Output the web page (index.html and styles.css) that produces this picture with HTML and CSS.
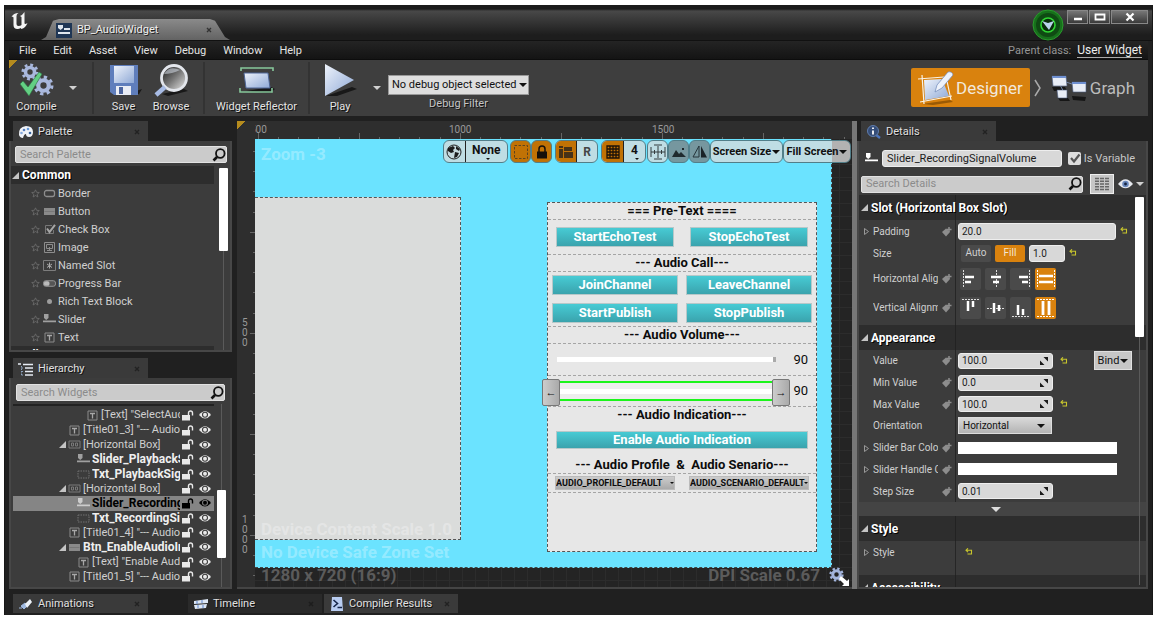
FILE: index.html
```html
<!DOCTYPE html>
<html lang="en">
<head>
<meta charset="utf-8">
<title>BP_AudioWidget</title>
<link rel="stylesheet" href="styles.css">
</head>
<body>
<svg class="defs" aria-hidden="true">
  <defs>
    <linearGradient id="g-blue" x1="0" y1="0" x2="1" y2="1"><stop offset="0" stop-color="#eef3fb"/><stop offset="1" stop-color="#8fa9d6"/></linearGradient>
    <linearGradient id="g-lens" x1="0" y1="0" x2="1" y2="1"><stop offset="0" stop-color="#111"/><stop offset=".5" stop-color="#777"/><stop offset="1" stop-color="#eee"/></linearGradient>
    <pattern id="ticks-x" x="3" width="101" height="18" patternUnits="userSpaceOnUse"><path d="M.5 12v6M20.5 16v2M40.500 16v2M60.500 16v2M81.500 16v2" stroke="#666"/></pattern>
    <pattern id="ticks-y" y="93" width="18" height="101" patternUnits="userSpaceOnUse"><path d="M13 .5h5M16 20.500h2M16 40.500h2M16 60.500h2M16 81.500h2" stroke="#666"/></pattern>
  </defs>
  <symbol id="x" viewBox="0 0 6 6"><path d="M1 1l4 4M5 1l-4 4" stroke="#181818" stroke-width="1.4"/></symbol>
  <symbol id="glass" viewBox="0 0 14 14"><circle cx="8.300" cy="5.500" r="4.300" fill="none" stroke="#111" stroke-width="1.800"/><path d="M5 9L1.500 12.500" stroke="#111" stroke-width="2.600"/></symbol>
  <symbol id="star" viewBox="0 0 9 9"><path d="M4.500.8l1.100 2.500 2.700.2-2.100 1.800.7 2.700-2.400-1.500L2.100 8l.7-2.700L.7 3.500l2.700-.2z" fill="none" stroke="#6e6e6e" stroke-width=".8"/></symbol>
  <symbol id="open" viewBox="0 0 7 7"><path d="M7 0v7H0z" fill="#c4c4c4"/></symbol>
  <symbol id="w-border" viewBox="0 0 13 11"><rect x="1.500" y="2.500" width="10" height="6" rx="2" fill="none" stroke="#8d8d8d" stroke-width="1.300"/></symbol>
  <symbol id="w-button" viewBox="0 0 13 11"><path d="M1 2h11v7H1z" fill="#8a8a8a"/><path d="M1.500 5.500h10" stroke="#777"/></symbol>
  <symbol id="w-check" viewBox="0 0 13 11"><path d="M9 1.500H2.500v8h8V6" fill="none" stroke="#777"/><path d="M4 4.500l2.500 3.500L12 .8" fill="none" stroke="#a6a6a6" stroke-width="2"/></symbol>
  <symbol id="w-image" viewBox="0 0 13 11"><path d="M1.500.5h10v10h-10zM3.500 2.500h6v4h-6zM6.500 5v3M4 8.500h5" fill="none" stroke="#8d8d8d"/></symbol>
  <symbol id="w-slot" viewBox="0 0 13 11"><path d="M.5.5h12v10H.5z" fill="none" stroke="#7d7d7d"/><path d="M6.500 2.500v6M4 4l5 3.500M9 4L4 7.500" stroke="#aaa"/></symbol>
  <symbol id="w-progress" viewBox="0 0 14 11"><rect x=".5" y="2.500" width="13" height="6" rx="2.500" fill="#555" stroke="#999"/><rect x="1" y="3" width="6" height="5" rx="2" fill="#bbb"/></symbol>
  <symbol id="w-dot" viewBox="0 0 13 11"><circle cx="6.500" cy="5.500" r="2.500" fill="#9d9d9d"/></symbol>
  <symbol id="w-slider" viewBox="0 0 13 11"><path d="M0 6.500h13v1.800H0zM1 0h4.500v4L3.200 6 1 4z" fill="currentColor"/></symbol>
  <symbol id="w-text" viewBox="0 0 13 11"><path d="M2 1h9v9H2z" fill="none" stroke="#8a8a8a"/><path d="M4 3.500h5M6.500 3.500V8.500" stroke="#a8a8a8" stroke-width="1.300"/></symbol>
  <symbol id="w-hbox" viewBox="0 0 13 11"><path d="M1 2h11v7H1zM3.500 4h2v3h-2zM7.500 4h2v3h-2z" fill="none" stroke="#7a7a7a"/></symbol>
  <symbol id="w-txt" viewBox="0 0 13 11"><path d="M1 2h11v7H1z" fill="none" stroke="#707070" stroke-dasharray="1.500 1"/></symbol>
  <symbol id="lock" viewBox="0 0 12 11"><path d="M0 5h8v5.500H0z" fill="currentColor"/><path d="M6.500 5V3a2 2 0 0 1 4 0v2.500" fill="none" stroke="currentColor" stroke-width="1.400"/></symbol>
  <symbol id="eye" viewBox="0 0 12 10"><path d="M0 5Q6-2.500 12 5 6 12 0 5z" fill="currentColor"/><circle cx="6" cy="4.800" r="2.500" fill="none" stroke="var(--iris,#3d3d3d)" stroke-width="1.100"/></symbol>
  <symbol id="tag" viewBox="0 0 10 10"><path d="M0 5l4-3.500L8 5l-4 4.500z" fill="#8d8d8d"/><path d="M7 0v5M4.500 2.500h5" stroke="#8d8d8d" stroke-width="1.500"/></symbol>
  <symbol id="undo" viewBox="0 0 8 8"><path d="M1 2.200h5.500V6H2.500M3 .3L1 2.200l2 2" fill="none" stroke="#c8c52c" stroke-width="1.100"/></symbol>
  <symbol id="tri" viewBox="0 0 5 7"><path d="M.5.5v6l4-3z" fill="none" stroke="#999"/></symbol>
  <symbol id="spin" viewBox="0 0 8 8"><path d="M3.500 0H8v4.500zM0 3.500V8h4.500z" fill="#1a1a1a"/></symbol>
  <symbol id="gear" viewBox="0 0 20 20"><circle cx="10" cy="10" r="5" fill="none" stroke="currentColor" stroke-width="4"/><circle cx="10" cy="10" r="8" fill="none" stroke="currentColor" stroke-width="3" stroke-dasharray="3.140 3.140"/></symbol>
</svg>

<div class="window">
  <header class="titlebar">
    <svg class="logo" viewBox="0 0 18 18" aria-label="Unreal"><path d="M1 5Q3 1 8 1 6 2 6 4v8q0 2 2 2 2 0 3-1V5L9.500 4Q12 3 14 0v11q0 2 3 0-2 5-6 6l-1-1q-1 1-3 1-4 0-4-4V6Q3 4 1 5z" fill="#f4f4f4"/></svg>
    <div class="doc-tab">
      <svg class="doc-icon" viewBox="0 0 16 15"><path d="M0 0h16v15H0z" fill="#1f3655"/><path d="M2 2h5v3L4.500 7 2 5zM2 9h12v2H2zM8 5h6v2H8z" fill="#dfe6ee"/></svg>
      <span>BP_AudioWidget</span>
      <svg class="x" viewBox="0 0 6 6"><use href="#x"/></svg>
    </div>
    <svg class="status" viewBox="0 0 32 32"><circle cx="16" cy="16" r="15" fill="#17701b" stroke="#2a9a2d"/><circle cx="16" cy="16" r="12" fill="#0f4a13"/><circle cx="16" cy="16" r="7" fill="#0a2c0c" stroke="#30d733" stroke-width="1.600"/><path d="M10 12l6 2 6-2-5 9z" fill="#b9d3ec"/></svg>
    <div class="win-buttons">
      <button aria-label="Minimize"><svg viewBox="0 0 12 10"><path d="M2 7h8" stroke="#fff" stroke-width="2.500"/></svg></button>
      <button aria-label="Maximize"><svg viewBox="0 0 12 10"><path d="M1.500 2.500h9v5h-9z" fill="none" stroke="#fff" stroke-width="1.800"/></svg></button>
      <button class="wide" aria-label="Close"><svg viewBox="0 0 12 10"><path d="M2.500 1.500l7 7M9.500 1.500l-7 7" stroke="#fff" stroke-width="2.200"/></svg></button>
    </div>
  </header>

  <nav class="menu">
    <button>File</button><button>Edit</button><button>Asset</button><button>View</button><button>Debug</button><button>Window</button><button>Help</button>
    <span class="parent">Parent class:</span><a href="#">User Widget</a>
  </nav>

  <div class="toolbar">
    <button class="tool compile"><svg class="big" viewBox="0 0 38 34"><g color="#a9b8dd"><use href="#gear" x="3" y="0" width="18" height="18"/><use href="#gear" x="15" y="12" width="21" height="21"/></g><path d="M2 21l3-3 5 6L21 9l3 2-13 22z" fill="#63cf83" stroke="#2d7043" stroke-width=".6"/></svg>Compile</button>
    <button class="drop" aria-label="Compile options"></button>
    <i class="sep"></i>
    <button class="tool save"><svg class="big" viewBox="0 0 38 34"><path d="M8 32l26-1 3-5-6 2z" fill="#181818"/><path d="M5 2h28v30H9l-4-3z" fill="#5f7ebc"/><path d="M9 3h20v17H9z" fill="url(#g-blue)"/><path d="M11 23h15v9H11z" fill="#e9edf5"/><path d="M14 24h4v7h-4z" fill="#4c659e"/></svg>Save</button>
    <button class="tool browse"><svg class="big" viewBox="0 0 38 34"><path d="M10 31l22-5 4 2-20 5z" fill="#181818"/><circle cx="22" cy="15" r="12.500" fill="url(#g-lens)" stroke="#e3e6ec" stroke-width="2.800"/><path d="M13 24l-9 8" stroke="#a7bbe4" stroke-width="4.500"/><path d="M12 11Q17 2 28 7q-8 4-16 4z" fill="#cbd2dc" opacity=".6"/></svg>Browse</button>
    <i class="sep"></i>
    <button class="tool reflector"><svg class="big" viewBox="0 0 38 34"><path d="M8 28l25-4 4 2-5 4z" fill="#181818"/><path d="M6 10h24l2 15H8z" fill="url(#g-blue)"/><path d="M3 8V5h32v3M2 25v4h32v-4" fill="none" stroke="#87c79b" stroke-width="1.600"/><path d="M6 10h24l2 15H8z" fill="none" stroke="#4f6797"/></svg>Widget Reflector</button>
    <i class="sep"></i>
    <button class="tool play"><svg class="big" viewBox="0 0 38 34"><path d="M5 33l26-9 5 2-20 7z" fill="#181818"/><path d="M4 1l29 16L4 33z" fill="url(#g-blue)"/></svg>Play</button>
    <button class="drop" aria-label="Play options"></button>
    <div class="debug">
      <span class="select big-select"><select id="dbg"><option>No debug object selected</option></select></span>
      <label for="dbg">Debug Filter</label>
    </div>
    <div class="modes">
      <button class="mode on"><svg viewBox="0 0 38 34"><path d="M6 33l28-4 3 2-20 3z" fill="#9a5a05"/><path d="M2 8l26-2M4 31l32-6M6 4l2 29M31 10l4 19" stroke="#f8f3e8" stroke-width="1.200" fill="none"/><path d="M8 9l18-1 7 17-24 4z" fill="url(#g-blue)"/><path d="M19 21l2-7L32 1q4-1 5 3L26 17z" fill="#edf2fb" stroke="#6f88b8" stroke-width=".7"/></svg>Designer</button>
      <svg class="chev" viewBox="0 0 8 18"><path d="M1 1l5 8-5 8" fill="none" stroke="#aaa" stroke-width="1.500"/></svg>
      <button class="mode"><svg viewBox="0 0 38 30"><path d="M2 14h13l2 4H4zM22 23l14 1-1 4-12-1zM8 25h10l2 3H10z" fill="#161616"/><path d="M13 8l15 5M10 12l5 9" stroke="#7486a8"/><path d="M2 3h14l1 10H3zM22 9h14v10H23zM7 17h10v8H8z" fill="#e8edf6" stroke="#495b7d" stroke-width=".6"/><path d="M2 3h14v2H2zM22 9h14v2H22z" fill="#6e8fd0"/></svg>Graph</button>
    </div>
  </div>

  <main class="work">
    <aside class="left">
      <section class="panel palette">
        <div class="tab"><svg class="tab-icon" viewBox="0 0 16 14"><path d="M1 10Q0 2 8 1q7 0 7 6 0 5-4 5-3 0-3-3-2 0-3 4-3 0-4-3z" fill="#f0f3f8"/><circle cx="6" cy="5" r="1.300" fill="#557ec0"/><circle cx="10" cy="4" r="1.300" fill="#679ad9"/><circle cx="12" cy="8" r="1.300" fill="#3864a0"/><circle cx="3.500" cy="8" r="1.300" fill="#88aadd"/></svg><span>Palette</span><svg class="x"><use href="#x"/></svg></div>
        <div class="body">
          <div class="search"><input aria-label="Search Palette" placeholder="Search Palette"><svg viewBox="0 0 14 14"><use href="#glass"/></svg></div>
          <div class="scroll">
            <div class="list">
              <h3><svg class="open"><use href="#open"/></svg>Common</h3>
              <ul>
                <li><svg class="star"><use href="#star"/></svg><svg class="wi"><use href="#w-border"/></svg>Border</li>
                <li><svg class="star"><use href="#star"/></svg><svg class="wi"><use href="#w-button"/></svg>Button</li>
                <li><svg class="star"><use href="#star"/></svg><svg class="wi"><use href="#w-check"/></svg>Check Box</li>
                <li><svg class="star"><use href="#star"/></svg><svg class="wi"><use href="#w-image"/></svg>Image</li>
                <li><svg class="star"><use href="#star"/></svg><svg class="wi"><use href="#w-slot"/></svg>Named Slot</li>
                <li><svg class="star"><use href="#star"/></svg><svg class="wi"><use href="#w-progress"/></svg>Progress Bar</li>
                <li><svg class="star"><use href="#star"/></svg><svg class="wi"><use href="#w-dot"/></svg>Rich Text Block</li>
                <li><svg class="star"><use href="#star"/></svg><svg class="wi"><use href="#w-slider"/></svg>Slider</li>
                <li><svg class="star"><use href="#star"/></svg><svg class="wi"><use href="#w-text"/></svg>Text</li>
              </ul>
              <h3><svg class="open"><use href="#open"/></svg>Editor</h3>
            </div>
            <div class="bar"><i></i></div>
          </div>
        </div>
      </section>

      <section class="panel hierarchy">
        <div class="tab"><svg class="tab-icon" viewBox="0 0 16 14"><path d="M0 2h3M5 2.500h10M7 6h8M7 9.500h8M7 13h8" stroke="#e6ecf4" stroke-width="1.700"/><path d="M3.500 4v9M3.500 6h2M3.500 9.500h2M3.500 13h2" stroke="#8ca2bd" fill="none" stroke-dasharray="1.500 1"/></svg><span>Hierarchy</span><svg class="x"><use href="#x"/></svg></div>
        <div class="body">
          <div class="search"><input aria-label="Search Widgets" placeholder="Search Widgets"><svg viewBox="0 0 14 14"><use href="#glass"/></svg></div>
          <div class="scroll">
            <ul class="tree">
              <li class="d3"><svg class="wi"><use href="#w-text"/></svg><span>[Text] "SelectAudioProfile"</span><svg class="lk"><use href="#lock"/></svg><svg class="ey"><use href="#eye"/></svg></li>
              <li class="d1"><svg class="wi"><use href="#w-text"/></svg><span>[Title01_3] "--- Audio Volume"</span><svg class="lk"><use href="#lock"/></svg><svg class="ey"><use href="#eye"/></svg></li>
              <li class="d1 parent-node"><svg class="open"><use href="#open"/></svg><svg class="wi"><use href="#w-hbox"/></svg><span>[Horizontal Box]</span><svg class="lk"><use href="#lock"/></svg><svg class="ey"><use href="#eye"/></svg></li>
              <li class="d2 named"><svg class="wi"><use href="#w-slider"/></svg><span>Slider_PlaybackSignalVolume</span><svg class="lk"><use href="#lock"/></svg><svg class="ey"><use href="#eye"/></svg></li>
              <li class="d2 named"><svg class="wi"><use href="#w-txt"/></svg><span>Txt_PlaybackSignalVolume</span><svg class="lk"><use href="#lock"/></svg><svg class="ey"><use href="#eye"/></svg></li>
              <li class="d1 parent-node"><svg class="open"><use href="#open"/></svg><svg class="wi"><use href="#w-hbox"/></svg><span>[Horizontal Box]</span><svg class="lk"><use href="#lock"/></svg><svg class="ey"><use href="#eye"/></svg></li>
              <li class="d2 named sel"><svg class="wi"><use href="#w-slider"/></svg><span>Slider_RecordingSignalVolume</span><svg class="lk"><use href="#lock"/></svg><svg class="ey"><use href="#eye"/></svg></li>
              <li class="d2 named"><svg class="wi"><use href="#w-txt"/></svg><span>Txt_RecordingSignalVolume</span><svg class="lk"><use href="#lock"/></svg><svg class="ey"><use href="#eye"/></svg></li>
              <li class="d1"><svg class="wi"><use href="#w-text"/></svg><span>[Title01_4] "--- Audio Indication"</span><svg class="lk"><use href="#lock"/></svg><svg class="ey"><use href="#eye"/></svg></li>
              <li class="d1 named parent-node"><svg class="open"><use href="#open"/></svg><svg class="wi"><use href="#w-button"/></svg><span>Btn_EnableAudioIndication</span><svg class="lk"><use href="#lock"/></svg><svg class="ey"><use href="#eye"/></svg></li>
              <li class="d2"><svg class="wi"><use href="#w-text"/></svg><span>[Text] "Enable Audio Indication"</span><svg class="lk"><use href="#lock"/></svg><svg class="ey"><use href="#eye"/></svg></li>
              <li class="d1"><svg class="wi"><use href="#w-text"/></svg><span>[Title01_5] "--- Audio Profile"</span><svg class="lk"><use href="#lock"/></svg><svg class="ey"><use href="#eye"/></svg></li>
            </ul>
            <div class="bar low"><i></i></div>
          </div>
        </div>
      </section>
    </aside>

    <section class="center">
      <div class="corner"></div>
      <div class="ruler-x"><svg><rect width="100%" height="18" fill="url(#ticks-x)"/></svg><span class="r500">500</span><span class="r1000">1000</span><span class="r1500">1500</span></div>
      <div class="ruler-y"><svg><rect width="18" height="100%" fill="url(#ticks-y)"/></svg><span class="v500">500</span><span class="v1000">1000</span></div>
      <div class="stage">
        <div class="device"></div>
        <div class="blank"></div>
        <div class="form">
          <h4 class="line">=== Pre-Text ====</h4>
          <div class="pair roomy line"><button>StartEchoTest</button><button>StopEchoTest</button></div>
          <h4 class="line">--- Audio Call---</h4>
          <div class="pair quad line"><button>JoinChannel</button><button>LeaveChannel</button><button>StartPublish</button><button>StopPublish</button></div>
          <h4 class="line">--- Audio Volume---</h4>
          <div class="vol line"><input type="range" aria-label="Playback volume" value="100"><output>90</output></div>
          <div class="vol line picked"><input type="range" aria-label="Recording volume" value="100"><output>90</output><button class="arrow prev">←</button><button class="arrow next">→</button></div>
          <h4>--- Audio Indication---</h4>
          <div class="pair single"><button>Enable Audio Indication</button></div>
          <h4 class="line">--- Audio Profile &nbsp;&amp;&nbsp; Audio Senario---</h4>
          <div class="combos line"><span class="select"><select aria-label="Audio profile"><option>AUDIO_PROFILE_DEFAULT</option></select></span><span class="select"><select aria-label="Audio scenario"><option>AUDIO_SCENARIO_DEFAULT</option></select></span></div>
        </div>
        <span class="mark zoom">Zoom -3</span>
        <div class="mark info"><span>Device Content Scale 1.0</span><span>No Device Safe Zone Set</span><span class="grey">1280 x 720 (16:9)</span></div>
        <span class="mark dpi">DPI Scale 0.67</span>
        <svg class="cog" viewBox="0 0 22 20"><g color="#a3b4dc"><use href="#gear" x="0" y="0" width="15" height="15"/></g><path d="M12 9l6 5 2-2v7h-7l2-2-5-5z" fill="#fff"/></svg>
        <div class="tools">
          <div class="grp g1"><button aria-label="Localization"><svg viewBox="0 0 16 16"><circle cx="8" cy="8" r="7" fill="#c5d8dd" stroke="#222"/><path d="M2 4l5-2 2 2-2 2 1 2-3 1-3-2zM9 8l4 1-2 4-3 1zM10 2l4 3-1 2-3-2z" fill="#1c1c1c"/></svg></button><button class="txt stack">None</button></div>
          <button class="sq on" aria-label="Outlines"><svg viewBox="0 0 16 16"><path d="M1.500 1.500h13v13h-13z" fill="none" stroke="#5d4420" stroke-dasharray="2.500 1.500"/></svg></button>
          <button class="sq on" aria-label="Lock"><svg viewBox="0 0 16 16"><path d="M3 7.500h10v7H3z" fill="#16100a"/><path d="M5 8V5a3 3 0 0 1 6 0v3" fill="none" stroke="#16100a" stroke-width="1.500"/></svg></button>
          <div class="grp g2"><button class="on" aria-label="Layout"><svg viewBox="0 0 16 16"><path d="M1 2h4v2H1zM1 5h4v9H1zM6 3h8v4H6zM6 8h9v6H6z" fill="#473217"/></svg></button><button class="txt r">R</button></div>
          <div class="grp g3"><button class="on" aria-label="Grid"><svg viewBox="0 0 16 16"><path d="M2 2h12v12H2zM5 2v12M8 2v12M11 2v12M2 5h12M2 8h12M2 11h12" fill="none" stroke="#1c1208" stroke-width="1.300"/></svg></button><button class="txt stack">4</button></div>
          <button class="sq pale" aria-label="Fit"><svg viewBox="0 0 16 16"><path d="M1 3v10M15 3v10M1 8h14M8 2v12M4 1h8M4 15h8M4.500 6v4M11.500 6v4" stroke="#343c3e" fill="none"/></svg></button>
          <button class="sq off" aria-label="Image"><svg viewBox="0 0 16 16"><path d="M1 13l4-7 3 4 2-2 5 5zM11 4h2v2h-2z" fill="#1f2a2e"/></svg></button>
          <button class="sq off" aria-label="Mirror"><svg viewBox="0 0 16 16"><path d="M7 2v11H1z" fill="none" stroke="#26343a"/><path d="M9 2v11.500h6z" fill="#1a2327"/></svg></button>
          <button class="txt long g4">Screen Size<i></i></button>
          <button class="txt long g5">Fill Screen<i></i></button>
        </div>
      </div>
    </section>

    <aside class="panel details">
      <div class="tab"><svg class="tab-icon" viewBox="0 0 16 14"><path d="M9 9l5 4" stroke="#4b74bd" stroke-width="2.500"/><circle cx="7" cy="6" r="5.500" fill="#354d78" stroke="#5f7dae"/><path d="M7 5.500v4M7 2.500v1.500" stroke="#fff" stroke-width="1.800"/></svg><span>Details</span><svg class="x"><use href="#x"/></svg></div>
      <div class="body">
        <div class="name-row"><svg class="wi"><use href="#w-slider"/></svg><input class="field" aria-label="Name" value="Slider_RecordingSignalVolume"><label><span class="tick"><input type="checkbox" checked><svg viewBox="0 0 12 12"><path d="M2 6l3 3.500L10.500 2.500" fill="none" stroke="#555" stroke-width="2.200"/></svg></span>Is Variable</label></div>
        <div class="find-row"><div class="search"><input aria-label="Search Details" placeholder="Search Details"><svg viewBox="0 0 14 14"><use href="#glass"/></svg></div><button class="matrix" aria-label="Property matrix"><svg viewBox="0 0 14 14"><path d="M0 1.500h4M5 1.500h4M10 1.500h4M0 4.200h4M5 4.200h4M10 4.200h4M0 7h4M5 7h4M10 7h4M0 9.700h4M5 9.700h4M10 9.700h4M0 12.500h4M5 12.500h4M10 12.500h4" stroke="#666" stroke-width="1.500"/></svg></button><button class="view" aria-label="View options"><svg viewBox="0 0 16 12"><path d="M0 6Q8-4 16 6 8 15 0 6z" fill="#e6e8ee"/><circle cx="8" cy="6" r="3.500" fill="#6a88bd"/><circle cx="8" cy="6" r="1.500" fill="#15233f"/></svg><i></i></button></div>
        <div class="props">
          <div class="grid">
            <h3><svg class="open"><use href="#open"/></svg>Slot (Horizontal Box Slot)</h3>
            <div class="rows slot">
              <div class="row snug"><label for="pad"><svg class="tri"><use href="#tri"/></svg><b>Padding</b><svg class="tag"><use href="#tag"/></svg></label><div><input class="field w-long" id="pad" value="20.0"><svg class="undo"><use href="#undo"/></svg></div></div>
              <div class="row snug"><label for="size"><b>Size</b></label><div><button class="seg">Auto</button><button class="seg on">Fill</button><input class="field w-short" id="size" value="1.0"><svg class="undo"><use href="#undo"/></svg></div></div>
              <div class="row tall"><label><b>Horizontal Alignment</b><svg class="tag"><use href="#tag"/></svg></label><div class="aligns">
                <button aria-label="Left"><svg viewBox="0 0 20 20"><path d="M2.500 1v18" stroke="#ddd" stroke-dasharray="2 1"/><path d="M4 8h9M4 13h6" stroke="#fff" stroke-width="2.500"/></svg></button>
                <button aria-label="Center"><svg viewBox="0 0 20 20"><path d="M10.500 1v18" stroke="#ddd" stroke-dasharray="2 1"/><path d="M5 8h10M7 13h6" stroke="#fff" stroke-width="2.500"/></svg></button>
                <button aria-label="Right"><svg viewBox="0 0 20 20"><path d="M18.500 1v18" stroke="#ddd" stroke-dasharray="2 1"/><path d="M8 8h9M11 13h6" stroke="#fff" stroke-width="2.500"/></svg></button>
                <button class="on" aria-label="Fill"><svg viewBox="0 0 20 20"><path d="M1.500 1v18M18.500 1v18" stroke="#fff" stroke-dasharray="2 1"/><path d="M3 7h14M3 13h14" stroke="#fff" stroke-width="2.500"/></svg></button></div></div>
              <div class="row tall"><label><b>Vertical Alignment</b><svg class="tag"><use href="#tag"/></svg></label><div class="aligns">
                <button aria-label="Top"><svg viewBox="0 0 20 20"><path d="M1 1.500h18" stroke="#ddd" stroke-dasharray="2 1"/><path d="M7 3v10M12 3v6" stroke="#fff" stroke-width="2.500"/></svg></button>
                <button aria-label="Middle"><svg viewBox="0 0 20 20"><path d="M1 10.500h18" stroke="#ddd" stroke-dasharray="2 1"/><path d="M8 5v10M13 7v6" stroke="#fff" stroke-width="2.500"/></svg></button>
                <button aria-label="Bottom"><svg viewBox="0 0 20 20"><path d="M1 18.500h18" stroke="#ddd" stroke-dasharray="2 1"/><path d="M7 7v10M12 11v6" stroke="#fff" stroke-width="2.500"/></svg></button>
                <button class="on" aria-label="Stretch"><svg viewBox="0 0 20 20"><path d="M1 1.500h18M1 18.500h18" stroke="#fff" stroke-dasharray="2 1"/><path d="M7 3v14M13 3v14" stroke="#fff" stroke-width="2.800"/></svg></button></div></div>
            </div>
            <h3><svg class="open"><use href="#open"/></svg>Appearance</h3>
            <div class="rows look">
              <div class="row"><label for="val"><b>Value</b><svg class="tag"><use href="#tag"/></svg></label><div><span class="num"><input class="field" id="val" value="100.0"><svg><use href="#spin"/></svg></span><svg class="undo"><use href="#undo"/></svg><button class="bind">Bind<i></i></button></div></div>
              <div class="row"><label for="min"><b>Min Value</b><svg class="tag"><use href="#tag"/></svg></label><div><span class="num"><input class="field" id="min" value="0.0"><svg><use href="#spin"/></svg></span></div></div>
              <div class="row"><label for="max"><b>Max Value</b><svg class="tag"><use href="#tag"/></svg></label><div><span class="num"><input class="field" id="max" value="100.0"><svg><use href="#spin"/></svg></span><svg class="undo"><use href="#undo"/></svg></div></div>
              <div class="row"><label for="ori"><b>Orientation</b></label><div><span class="select ori"><select id="ori"><option>Horizontal</option></select></span></div></div>
              <div class="row"><label><svg class="tri"><use href="#tri"/></svg><b>Slider Bar Color</b><svg class="tag"><use href="#tag"/></svg></label><div><button class="swatch" aria-label="Slider bar color"></button></div></div>
              <div class="row"><label><svg class="tri"><use href="#tri"/></svg><b>Slider Handle Color</b><svg class="tag"><use href="#tag"/></svg></label><div><button class="swatch" aria-label="Slider handle color"></button></div></div>
              <div class="row"><label for="step"><b>Step Size</b><svg class="tag"><use href="#tag"/></svg></label><div><span class="num"><input class="field" id="step" value="0.01"><svg><use href="#spin"/></svg></span></div></div>
            </div>
            <button class="more" aria-label="Show advanced"><i></i></button>
            <h3><svg class="open"><use href="#open"/></svg>Style</h3>
            <div class="rows style"><div class="row"><label><svg class="tri"><use href="#tri"/></svg><b>Style</b></label><div><svg class="undo"><use href="#undo"/></svg></div></div></div>
            <h3><svg class="open"><use href="#open"/></svg>Accessibility</h3>
          </div>
          <div class="bar"><i></i></div>
        </div>
      </div>
    </aside>
  </main>

  <footer class="dock">
    <div class="tab"><svg class="tab-icon" viewBox="0 0 16 14"><path d="M3 9l4-3 2 3-3 3zM1 11h3" fill="#9fb9e0" stroke="#9fb9e0"/><path d="M7 7l5-5 2 3-5 6z" fill="#edf2f8"/></svg><span>Animations</span><svg class="x"><use href="#x"/></svg></div>
    <div class="tab dim"><svg class="tab-icon" viewBox="0 0 16 14"><path d="M1 4l14-2v4L1 7zM1 8l13-1-1 4-11 1z" fill="#dce6f4"/><path d="M4 4v3M9 3v3M5 8v3M10 8v3" stroke="#5f86d0"/></svg><span>Timeline</span><svg class="x"><use href="#x"/></svg></div>
    <div class="tab"><svg class="tab-icon" viewBox="0 0 16 14"><path d="M3 0h10l1 14H2z" fill="#b9cdf2"/><path d="M4.500 3l4 3.500-4 3.500M8.500 10.500H13" stroke="#16264a" stroke-width="1.600" fill="none"/></svg><span>Compiler Results</span><svg class="x"><use href="#x"/></svg></div>
  </footer>
</div>
</body>
</html>
```

FILE: styles.css
```css
*, *::before, *::after { box-sizing: border-box; }
body { margin: 0; background: #fff; font: 11px/14px Roboto, "Liberation Sans", sans-serif; color: #d0d0d0; }
button, input, select { font: inherit; color: inherit; margin: 0; padding: 0; border: 0; background: none; min-width: 0; }
h3, h4, ul { margin: 0; padding: 0; list-style: none; }
svg { display: block; flex: none; }
.defs { position: absolute; width: 0; height: 0; }

.window { height: calc(100vh - 9px); margin: 5px 3px 4px 4px; padding: 0 4px 1px; background: #202020; border: 1px solid #181818; border-width: 0 1px; display: flex; flex-direction: column; }

.titlebar { flex: none; height: 36px; margin: 0 -4px; padding: 0 4px; display: flex; background: linear-gradient(#1b1b1b 0 4px, #484848 6px, #1d1d1d 30px, #1d1d1d); border-bottom: 1px solid #111; }
.logo { width: 19px; height: 18px; margin: 7px 0 0 1px; }
.doc-tab { width: 189px; height: 21px; margin: 14px 0 0 12px; padding: 1px 18px 0 15px; display: flex; align-items: center; background: linear-gradient(#8a8a8a, #636363); clip-path: polygon(0 100%, 5px 86%, 12px 8%, 18px 0, 169px 0, 174px 8%, 184px 86%, 100% 100%); color: #eee; text-shadow: 1px 1px #222; }
.doc-icon { width: 16px; height: 15px; margin-right: 5px; }
.x { width: 6px; height: 6px; margin-left: auto; opacity: .7; }
.status { width: 32px; height: 32px; margin: 4px 3px 0 auto; }
.win-buttons { display: flex; gap: 1px; padding-top: 5px; }
.win-buttons button { width: 21px; height: 14px; background: linear-gradient(#777, #3a3a3a); border: 1px solid #888; display: grid; place-items: center; }
.win-buttons .wide { width: 37px; }
.win-buttons svg { width: 12px; height: 10px; }

.menu { flex: none; height: 19px; padding: 1px 6px 0 10px; display: flex; align-items: center; gap: 17px; background: linear-gradient(#242424, #141414); color: #e4e4e4; border-bottom: 1px solid #0d0d0d; }
.menu .parent { margin-left: auto; color: #969696; }
.menu a { color: #eee; text-decoration: none; border-bottom: 1px solid #aaa; line-height: 13px; margin-left: -11px; font-size: 12px; }

.toolbar { flex: none; height: 56px; display: flex; background: #3e3e3e linear-gradient(135deg, #b58b1e 0 6px, transparent 6px); text-shadow: 1px 1px #111; }
.tool { display: flex; flex-direction: column; align-items: center; padding-top: 3px; line-height: 14px; color: #e4e4e4; text-shadow: inherit; }
.big { width: 38px; height: 34px; margin-bottom: 3px; }
.compile { width: 55px; }
.drop { width: 18px; display: grid; place-items: center; }
.drop::before, .select::after, .long i, .bind i, .view i { content: ""; border: solid transparent; border-width: 4px 4px 0; border-top-color: currentColor; }
.sep { width: 2px; margin: 2px 0; background: #333; }
.compile + .drop + .sep { margin-left: 10px; }
.save { width: 59px; }
.browse { width: 36px; margin-right: 14px; }
.reflector { width: 103px; }
.play { width: 58px; padding-left: 2px; }
.debug { margin: 15px 0 0 2px; display: flex; flex-direction: column; align-items: center; color: #c4c4c4; gap: 2px; }
.select { position: relative; display: inline-flex; align-items: center; }
.select select { appearance: none; width: 100%; }
.select::after { position: absolute; right: 6px; color: #111; pointer-events: none; }
.big-select { width: 141px; height: 20px; background: #dedede; border: 1px solid #999; color: #111; padding-left: 3px; }
.big-select select { text-shadow: none; }
.big-select::after { right: 1px; }
.modes { margin: 8px 13px 9px auto; display: flex; align-items: center; gap: 4px; }
.mode { height: 39px; display: flex; align-items: center; gap: 2px; font-size: 17px; color: #bcbcbc; }
.mode svg { width: 38px; height: 34px; }
.mode.on { background: #d9820e; color: #f2e8dc; padding: 0 7px 0 5px; border-radius: 2px; }
.mode:last-child { padding-left: 4px; }
.chev { width: 8px; height: 18px; }

.work { flex: 1; min-height: 0; display: flex; padding: 5px 0; }
.left { flex: none; width: 223px; margin-right: 5px; display: flex; flex-direction: column; gap: 6px; }
.left .panel { flex: 1; }
.panel { min-height: 0; display: flex; flex-direction: column; }
.tab { flex: none; width: 135px; height: 20px; margin-left: 4px; padding: 1px 8px 0 5px; display: flex; align-items: center; gap: 4px; background: #3a3a3a; color: #e0e0e0; text-shadow: 1px 1px #111; }
.tab-icon { width: 16px; height: 14px; }
.body { flex: 1; min-height: 0; background: #3c3c3c; border: 2px solid #474747; border-top: 0; display: flex; flex-direction: column; }
.search { flex: none; height: 17px; display: flex; align-items: center; background: #cbcbcb; border: 1px solid #e2e2e2; border-radius: 2px; padding: 0 0 0 4px; color: #222; }
.search input { flex: 1; outline: 0; }
.search input::placeholder { color: #8b8b8b; opacity: 1; }
.search svg { width: 14px; height: 14px; }
.palette .search { margin: 5px 3px 3px 4px; }
.hierarchy .search { margin: 6px 5px 3px; }
.scroll { flex: 1; min-height: 0; display: flex; }
.list { flex: 1; overflow: hidden; }
h3 { height: 18px; background: #2d2d2d; color: #fff; font-size: 12px; line-height: 18px; display: flex; align-items: center; gap: 3px; text-shadow: 1px 1px #000; padding-left: 1px; }
.open { width: 7px; height: 7px; }
.list li { height: 18px; display: flex; align-items: center; padding: 1px 0 0 20px; }
.star { width: 9px; height: 9px; margin-right: 3px; }
.wi { width: 13px; height: 11px; margin-right: 2px; color: #a0a0a0; }
.bar { flex: none; width: 9px; margin: 2px 2px 0 5px; background: linear-gradient(90deg, transparent 4px, #5a5a5a 4px 5px, transparent 5px); }
.bar i { display: block; height: 83px; background: #fff; border-radius: 1px; }
.tree { flex: 1; min-width: 0; margin: 0 0 3px 2px; padding-top: 2px; border-top: 2px solid #222; display: flex; flex-direction: column; }
.tree li { flex: 1; min-height: 0; display: flex; align-items: center; padding-right: 3px; }
.tree span { flex: 1; min-width: 0; overflow: hidden; white-space: nowrap; }
.tree .d1 { padding-left: 55px; }
.tree .parent-node { padding-left: 46px; }
.parent-node .open { margin-right: 2px; }
.tree .d2 { padding-left: 64px; }
.tree .d3 { padding-left: 73px; }
.named { font-size: 12px; font-weight: 700; color: #efefef; }
.tree .sel { background: #858585; color: #000; --iris: #777; }
.sel .wi { color: #ccc; }
.lk { width: 12px; height: 11px; margin: 0 5px 0 2px; color: #e8e8e8; }
.ey { width: 12px; height: 10px; color: #e8e8e8; }
.sel .lk, .sel .ey { color: #000; }
.bar.low { margin: 0 4px 0 3px; padding-top: 86px; }
.bar.low i { height: 68px; }

.center { flex: 1; min-width: 0; display: grid; grid-template: 18px 1fr / 18px 1fr; background: #2e2e2e; border-bottom: 2px solid #444; overflow: hidden; font-size: 10px; color: #999; }
.corner { background: linear-gradient(135deg, #b58b1e 0 6px, transparent 6px); }
.ruler-x, .ruler-y { position: relative; overflow: hidden; }
.ruler-x svg, .ruler-y svg { width: 100%; height: 100%; }
.ruler-x span, .ruler-y span { position: absolute; line-height: 10px; }
.ruler-x span { top: 4px; }
.r500 { left: -5px; } .r1000 { left: 194px; } .r1500 { left: 397px; }
.ruler-y span { left: 5px; width: 6px; word-break: break-all; }
.v500 { top: 179px; } .v1000 { top: 376px; }
.stage { position: relative; overflow: hidden; background: repeating-linear-gradient(90deg, transparent 0 12px, #2c2c2c 12px 13px), repeating-linear-gradient(transparent 0 12px, #2c2c2c 12px 13px), #242424; }
.device { position: absolute; left: 0; top: 0; width: 577px; height: 429px; background: #6be3ff; border: 1px dashed #444; border-width: 0 1px 1px 0; }
.blank { position: absolute; left: 0; top: 58px; width: 206px; height: 343px; background: #dadcdb; border: 1px dashed #555; border-left: 0; }
.form { position: absolute; left: 292px; top: 63px; width: 270px; height: 350px; background: #e7e7e7; border: 1px dashed #555; color: #0c0c0c; font-size: 13px; }
.line { border-bottom: 1px dashed #a5a5a5; }
h4 { font-size: 13px; line-height: 16px; text-align: center; font-weight: 700; }
.pair { display: grid; grid-template-columns: 1fr 1fr; gap: 8px; padding: 3px 4px; }
.pair button { height: 20px; background: linear-gradient(#47cbd4, #3aa3ad); border: 1px solid #b6c8c9; color: #fff; font-weight: 700; line-height: 18px; }
.pair.roomy { gap: 16px; padding: 7px 8px; }
.form .pair.single { grid-template-columns: 1fr; padding: 8px; }
.single button { height: 18px; line-height: 16px; }
.vol { position: relative; height: 32px; display: flex; align-items: center; padding: 0 8px 0 9px; }
.vol input { appearance: none; width: 219px; height: 5px; background: #fff; margin-right: auto; }
.vol input::-webkit-slider-thumb { appearance: none; width: 3px; height: 5px; background: #aaa; }
.form .picked { height: 31px; }
.picked::before { content: ""; position: absolute; left: 0; right: 30px; top: 5px; height: 20px; border-top: 2px solid #1bf51b; border-bottom: 2px solid #1bf51b; background: #ededed; }
.picked input { position: relative; }
.arrow { position: absolute; top: 3px; width: 18px; height: 27px; background: linear-gradient(90deg, #ccc, #aaa); border: 1px solid #777; border-radius: 2px; font-size: 11px; }
.prev { left: -6px; } .next { left: 224px; }
.combos { display: grid; grid-template-columns: 1fr 1fr; gap: 14px; padding: 2px 7px; }
.combos .select { height: 14px; font-size: 9px; font-weight: 700; background: linear-gradient(#ccc, #aaa); border: 1px solid #bbb; }
.combos .select::after { right: 0; border-width: 2px 2px 0; }
.mark { position: absolute; font-size: 17px; line-height: 23px; font-weight: 700; color: #ffffff4d; white-space: nowrap; }
.zoom { left: 6px; top: 4px; }
.info { left: 6px; bottom: 0; display: flex; flex-direction: column; }
.grey, .dpi { color: #5b5b5b; }
.dpi { right: 32px; bottom: 0; }
.cog { position: absolute; right: 1px; bottom: 0; width: 22px; height: 20px; }
.tools { position: absolute; top: 1px; right: 1px; height: 23px; display: flex; color: #111; font-size: 12px; font-weight: 700; }
.tools svg { width: 16px; height: 16px; }
.grp { display: flex; border: 1px solid #527e89; border-radius: 6px; overflow: hidden; background: #bfdde4; }
.grp button, .sq { flex: 1; display: grid; place-items: center; }
.grp button + button { border-left: 1px solid #222; }
.g1 { width: 65px; margin-right: 2px; } .g1 .stack { flex: 2; }
.g2 { width: 43px; margin: 0 3px; color: #444; } .g3 { width: 45px; margin-right: 1px; }
.tools .sq { flex: none; width: 21px; border: 1px solid #527e89; border-radius: 6px; }
.tools .on { background: #c17205; }
.pale { background: #bfdde4; } .off { background: #76979f; }
.stack { position: relative; line-height: 14px; }
.grp .stack { padding-bottom: 4px; }
.stack::after { content: ""; position: absolute; bottom: 2px; left: 50%; border: solid transparent; border-width: 2px 2px 0; border-top-color: #111; }
.long { display: flex; align-items: center; justify-content: center; gap: 1px; border: 1px solid #527e89; border-radius: 6px; background: #bfdde4; font-size: 11px; white-space: nowrap; }
.g4 { width: 73px; }
.g5 { width: 68px; background: linear-gradient(90deg, #bfdde4 48px, #b2b2b2 48px); }

.details { flex: none; width: 296px; border-left: 5px solid #777; }
.details > .tab { margin-left: 4px; }
.name-row { flex: none; display: flex; align-items: center; margin: 9px 11px 0 6px; color: #c8c8c8; }
.name-row .wi { color: #fff; margin-right: 4px; }
.field { height: 17px; background: #d8d8d8; border: 1px solid #eee; border-radius: 3px; color: #1c1c1c; padding: 0 4px; width: 100%; }
.name-row .field { flex: 1; width: 0; margin-right: 6px; font-size: 11px; }
.name-row label { display: flex; align-items: center; gap: 3px; }
.tick { position: relative; width: 13px; height: 13px; }
.tick input { appearance: none; width: 13px; height: 13px; background: #ddd; border-radius: 2px; display: block; }
.tick svg { position: absolute; left: 1px; top: 0; width: 12px; height: 12px; pointer-events: none; }
.find-row { flex: none; display: flex; align-items: center; margin: 7px 0 1px 2px; }
.find-row .search { flex: 1; }
.matrix { width: 24px; height: 20px; margin-left: 7px; background: #c6c6c6; border: 1px solid #eee; display: grid; place-items: center; }
.matrix svg { width: 14px; height: 14px; }
.view { display: flex; align-items: center; gap: 3px; margin-left: 4px; width: 28px; }
.view svg { width: 15px; height: 12px; }
.props { position: relative; flex: 1; min-height: 0; overflow: hidden; font-size: 10px; }
.props::before { content: ""; position: absolute; left: 96px; top: 0; bottom: 0; width: 1px; background: #262626; }
.props .bar { position: absolute; right: 0; top: 0; bottom: 2px; margin: 2px 2px 0; }
.props .bar i { height: 140px; }
.props h3 { position: relative; height: 25px; padding-left: 2px; background: linear-gradient(90deg, #2d2d2d 96px, #222 96px 97px, #2d2d2d 97px); }
.rows { display: grid; }
.row { height: 22px; display: flex; align-items: center; }
.tall { height: 29px; }
.row label { position: relative; flex: none; width: 96px; padding: 1px 3px 0 14px; display: flex; align-items: center; }
.row b { flex: 1; font-weight: 400; overflow: hidden; white-space: nowrap; margin-right: 4px; }
.tri { position: absolute; left: 5px; width: 5px; height: 7px; }
.tag { width: 10px; height: 10px; }
.row > div { flex: 1; min-width: 0; display: flex; align-items: center; gap: 7px; padding-left: 3px; }
.snug > div { gap: 4px; }
.undo { width: 8px; height: 8px; }
.row .field { padding: 0 3px; }
.row .w-long { flex: none; width: 158px; }
.row .w-short { width: 36px; }
.seg { width: 30px; height: 17px; background: #4a4a4a; border-radius: 2px; }
.row .seg:first-child { margin-left: 3px; }
.seg.on { background: #d9820e; color: #f4e6d2; }
.row .aligns { gap: 4px; padding-left: 5px; }
.aligns button { width: 21px; height: 22px; background: #4a4a4a; border-radius: 2px; display: grid; place-items: center; }
.aligns .on { background: #d9820e; }
.aligns svg { width: 20px; height: 20px; }
.slot { padding-bottom: 3px; }
.look { height: 152px; grid-auto-rows: 1fr; }
.look .row { height: auto; }
.num { position: relative; width: 95px; }
.num .field { display: block; height: 16px; }
.num svg { position: absolute; right: 5px; top: 4px; width: 8px; height: 8px; }
.bind { width: 38px; height: 19px; margin: 0 14px 0 auto; background: #c6c6c6; border: 1px solid #e0e0e0; color: #111; display: flex; align-items: center; justify-content: center; gap: 1px; font-size: 11px; }
.ori { width: 94px; height: 17px; background: linear-gradient(#d8d8d8, #b4b4b4); border: 1px solid #ddd; color: #111; padding-left: 4px; }
.swatch { width: 159px; height: 12px; background: #fff; }
.more { position: relative; display: grid; place-items: center; width: 100%; height: 14px; background: #444; padding-right: 14px; }
.more i { border: solid transparent; border-width: 5px 5px 0; border-top-color: #ddd; }
.style { padding-bottom: 12px; }
.style .undo { margin-left: 7px; }

.dock { flex: none; display: flex; height: 20px; }
.dock .tab { height: 19px; }
.dock .tab + .tab { margin-left: 40px; width: 134px; }
.dock .tab + .tab + .tab { margin-left: 2px; }
.dock .dim { background: #2a2a2a; }
```
